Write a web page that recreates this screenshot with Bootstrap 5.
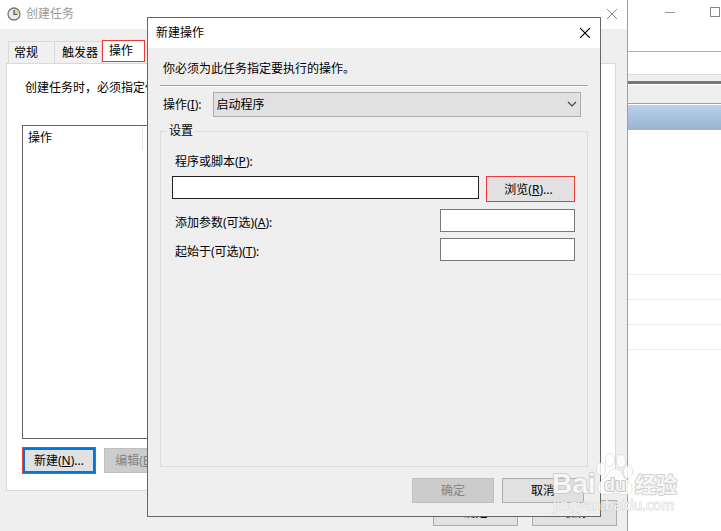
<!DOCTYPE html>
<html lang="zh-CN">
<head>
<meta charset="utf-8">
<meta name="viewport" content="width=device-width, initial-scale=1">
<title>创建任务</title>
<link href="https://cdn.jsdelivr.net/npm/bootstrap@5.3.0/dist/css/bootstrap.min.css" rel="stylesheet">
<style>
body{font:12px/16px "Noto Sans","Noto Sans CJK SC",sans-serif;color:#000;background:#fff}
.desktop{min-height:531px;height:100vh}
.win-btn{background:none;border:0;padding:0;display:flex;line-height:0}
/* console window at the back */
.console-title{height:52px;border-bottom:1px solid #b1b1b5;gap:35px;padding:7px 1px 0 0}
.console-menu{height:23px;border-bottom:1px solid #dcdcdc}
.console-tools{height:9px;background:#efefef;border-bottom:3px solid #777}
.console-bar{height:20px;background:#efefef;border-top:1px solid #fff;border-bottom:1px solid #a0a0a0}
.console-head{height:25px;margin-top:1px;background:linear-gradient(#b9d1ea,#99b4d1)}
.console-rows{padding-top:120px}
.console-rows li{height:25px;border-bottom:1px solid #eee}
/* task window */
.task-win{inset:0 93px 0 0;background:#efefef;border-right:1px solid #a0a0a0}
.task-title{height:29px;color:#999;padding:0 10px 2px 7px}
.task-title span{margin-left:5px}
.task-tabs{padding:11px 0 0 8px;height:34px}
.task-tabs .tab-btn{height:22px;background:#f0f0f0;border:1px solid #d9d9d9;border-bottom:0;padding:1px 5px 0;margin-top:1px;width:47px;white-space:nowrap;text-align:left;color:#000}
.task-tabs .tab-btn+.tab-btn{border-left:0;padding-left:7px}
.task-tabs .tab-btn.active{width:43px;background:#fff;border:1px solid #f03a3a;margin-top:0;padding:0 6px}
.task-panel{margin:0 11px 0 6px;border:1px solid #d9d9d9;background:#fff;padding:16px 15px}
.task-intro{padding-left:3px}
.task-list{border:1px solid #646464;margin:29px 0 8px}
.list-head{height:24px}
.list-head span{width:120px;padding:4px 5px 0;border-right:1px solid #e5e5e5}
.sys-btn{height:25px;border:1px solid #adadad;background:#e1e1e1;color:#000;padding:0;white-space:nowrap}
.sys-btn:disabled{background:#ccc;border-color:#bfbfbf;color:#838383}
.marked{border:1px solid #f03a3a}
.new-btn{width:72px;border:2px solid #0078d7;display:block}
.edit-btn{width:70px;margin-top:1px}
.task-foot{padding:9px 10px 5px;gap:14px}
.foot-btn{width:85px;height:26px}
/* action dialog */
.action-win{inset:17px 120px 14px 147px;background:#efefef;border:1px solid #666}
.action-title{height:30px;background:#fff;padding:0 10px 0 8px}
.action-body{padding:13px 12px}
.intro{padding-left:3px}
.rule{border-top:1px solid #a0a0a0;border-bottom:1px solid #fff;margin:8px 0 5px}
.kind-row{padding:0 7px 0 3px;gap:11px}
.kind-select{height:25px;border:1px solid #adadad;background:#e1e1e1;color:#000;padding:0 3px;appearance:none;border-radius:0}
.kind-arrow{right:4px;top:9px;pointer-events:none}
.group-box{border:1px solid #dcdcdc;margin-top:6px;padding:0 12px 0 11px}
.group-box legend{float:none;width:auto;font-size:12px;line-height:16px;margin:0 0 15px -6px;padding:0 3px}
.group-box label{padding-left:3px}
.prog-label{margin-bottom:6px}
.field{height:23px;border:1px solid #7a7a7a;background:#fff;padding:0 3px;min-width:0}
.field.active{border-color:#222}
.field-short{width:135px}
.field-row{margin-bottom:6px}
.field-row label{padding-top:5px}
.prog-row{gap:7px;margin-bottom:7px}
.browse-btn{width:89px;height:26px;padding:1px 4px 0 0;border-color:#f03a3a}
.dlg-foot{padding:8px 4px 0 0;margin-top:3px}
.dlg-btn{width:82px}
.wm{right:40px;bottom:14px;pointer-events:none}
</style>
</head>
<body>
<div class="desktop position-relative overflow-hidden">
  <section aria-label="控制台">
    <div class="console-title d-flex justify-content-end align-items-start">
      <button class="win-btn" aria-label="最小化"><svg width="10" height="10"><path d="M0 5.5h10" stroke="#999"/></svg></button>
      <button class="win-btn" aria-label="最大化"><svg width="10" height="10"><rect x=".5" y=".5" width="9" height="9" fill="none" stroke="#888"/></svg></button>
    </div>
    <div class="console-menu"></div>
    <div class="console-tools"></div>
    <div class="console-bar"></div>
    <div class="console-head"></div>
    <ul class="console-rows list-unstyled m-0"><li></li><li></li><li></li><li></li></ul>
  </section>

  <section class="task-win position-absolute d-flex flex-column" aria-label="创建任务">
    <header class="task-title bg-white d-flex align-items-center">
      <svg width="14" height="14" viewBox="0 0 14 14"><circle cx="7" cy="7" r="6" fill="#e4edf4" stroke="#777" stroke-width="1.3"/><path d="M7 7V2a5 5 0 0 1 5 5z" fill="#f3cf7a"/><path d="M7 3v4.500h3.500" fill="none" stroke="#435a70" stroke-width="1.2"/></svg>
      <span class="me-auto">创建任务</span>
      <button class="win-btn" aria-label="关闭"><svg width="10" height="10"><path d="M0 0l10 10M10 0L0 10" stroke="#888"/></svg></button>
    </header>
    <nav class="task-tabs d-flex align-items-start">
      <button class="tab-btn">常规</button><button class="tab-btn">触发器</button><button class="tab-btn active">操作</button>
    </nav>
    <div class="task-panel flex-grow-1 d-flex flex-column">
      <div class="task-intro text-nowrap overflow-hidden">创建任务时，必须指定任务启动时发生的操作。</div>
      <div class="task-list flex-grow-1"><div class="list-head d-flex"><span>操作</span></div></div>
      <div class="d-flex gap-2 align-items-start">
        <div class="marked"><button class="sys-btn new-btn">新建(<u>N</u>)...</button></div>
        <button class="sys-btn edit-btn" disabled>编辑(<u>E</u>)...</button>
      </div>
    </div>
    <footer class="task-foot d-flex justify-content-end">
      <button class="sys-btn foot-btn">确定</button><button class="sys-btn foot-btn">取消</button>
    </footer>
  </section>

  <section class="action-win position-absolute d-flex flex-column" role="dialog" aria-label="新建操作">
    <header class="action-title d-flex align-items-center justify-content-between">
      <span>新建操作</span>
      <button class="win-btn" aria-label="关闭"><svg width="10" height="10"><path d="M0 0l10 10M10 0L0 10" stroke="#000" stroke-width="1.2"/></svg></button>
    </header>
    <form class="action-body flex-grow-1 d-flex flex-column">
      <div class="intro">你必须为此任务指定要执行的操作。</div>
      <div class="rule"></div>
      <div class="kind-row d-flex align-items-center">
        <label for="kind">操作(<u>I</u>):</label>
        <div class="position-relative flex-grow-1">
          <select id="kind" class="kind-select w-100"><option>启动程序</option></select>
          <svg class="kind-arrow position-absolute" width="10" height="7"><path d="M1 1l4 4 4-4" fill="none" stroke="#444" stroke-width="1.2"/></svg>
        </div>
      </div>
      <fieldset class="group-box flex-grow-1">
        <legend>设置</legend>
        <label for="prog" class="prog-label d-block">程序或脚本(<u>P</u>):</label>
        <div class="prog-row d-flex align-items-start">
          <input id="prog" class="field active flex-grow-1"><button type="button" class="sys-btn browse-btn">浏览(<u>R</u>)...</button>
        </div>
        <div class="d-flex align-items-center justify-content-between field-row"><label for="args">添加参数(可选)(<u>A</u>):</label><input id="args" class="field field-short"></div>
        <div class="d-flex align-items-center justify-content-between field-row"><label for="start">起始于(可选)(<u>T</u>):</label><input id="start" class="field field-short"></div>
      </fieldset>
      <div class="dlg-foot d-flex justify-content-end gap-2">
        <button type="button" class="sys-btn dlg-btn" disabled>确定</button><button type="button" class="sys-btn dlg-btn">取消</button>
      </div>
    </form>
  </section>

  <svg class="wm position-absolute" width="130" height="66" viewBox="0 0 130 66" aria-hidden="true">
    <g fill="#fff" fill-opacity=".8" stroke="#c8c8c8" stroke-opacity=".8" paint-order="stroke" stroke-width="2" stroke-linejoin="round">
      <text x="1" y="42" font-family="Liberation Sans" font-weight="700" font-size="28">Bai</text>
      <g stroke-width="1"><ellipse cx="50" cy="18" rx="4.500" ry="6"/><ellipse cx="59" cy="9" rx="4.500" ry="6.500"/><ellipse cx="70" cy="10" rx="4.500" ry="6.500"/><ellipse cx="77" cy="21" rx="4.500" ry="6"/>
      <path d="M64 18c5 0 7 4 9 8 3 3 8 6 8 12-1 6-6 6-10 5-4-1-9-1-13 0-5 1-11 0-11-6 0-6 5-8 8-11 3-4 4-8 9-8z"/></g>
      <text x="53" y="40" font-family="Liberation Sans" font-weight="700" font-size="18" stroke="#bbb">du</text>
      <text x="84" y="41" font-family="Noto Sans CJK SC" font-weight="700" font-size="21">经验</text>
      <text x="2" y="59" font-family="Noto Sans" font-size="14" stroke-width="1">jingyan.baidu.com</text>
    </g>
  </svg>
</div>
<script src="https://cdn.jsdelivr.net/npm/bootstrap@5.3.0/dist/js/bootstrap.bundle.min.js"></script>
</body>
</html>
